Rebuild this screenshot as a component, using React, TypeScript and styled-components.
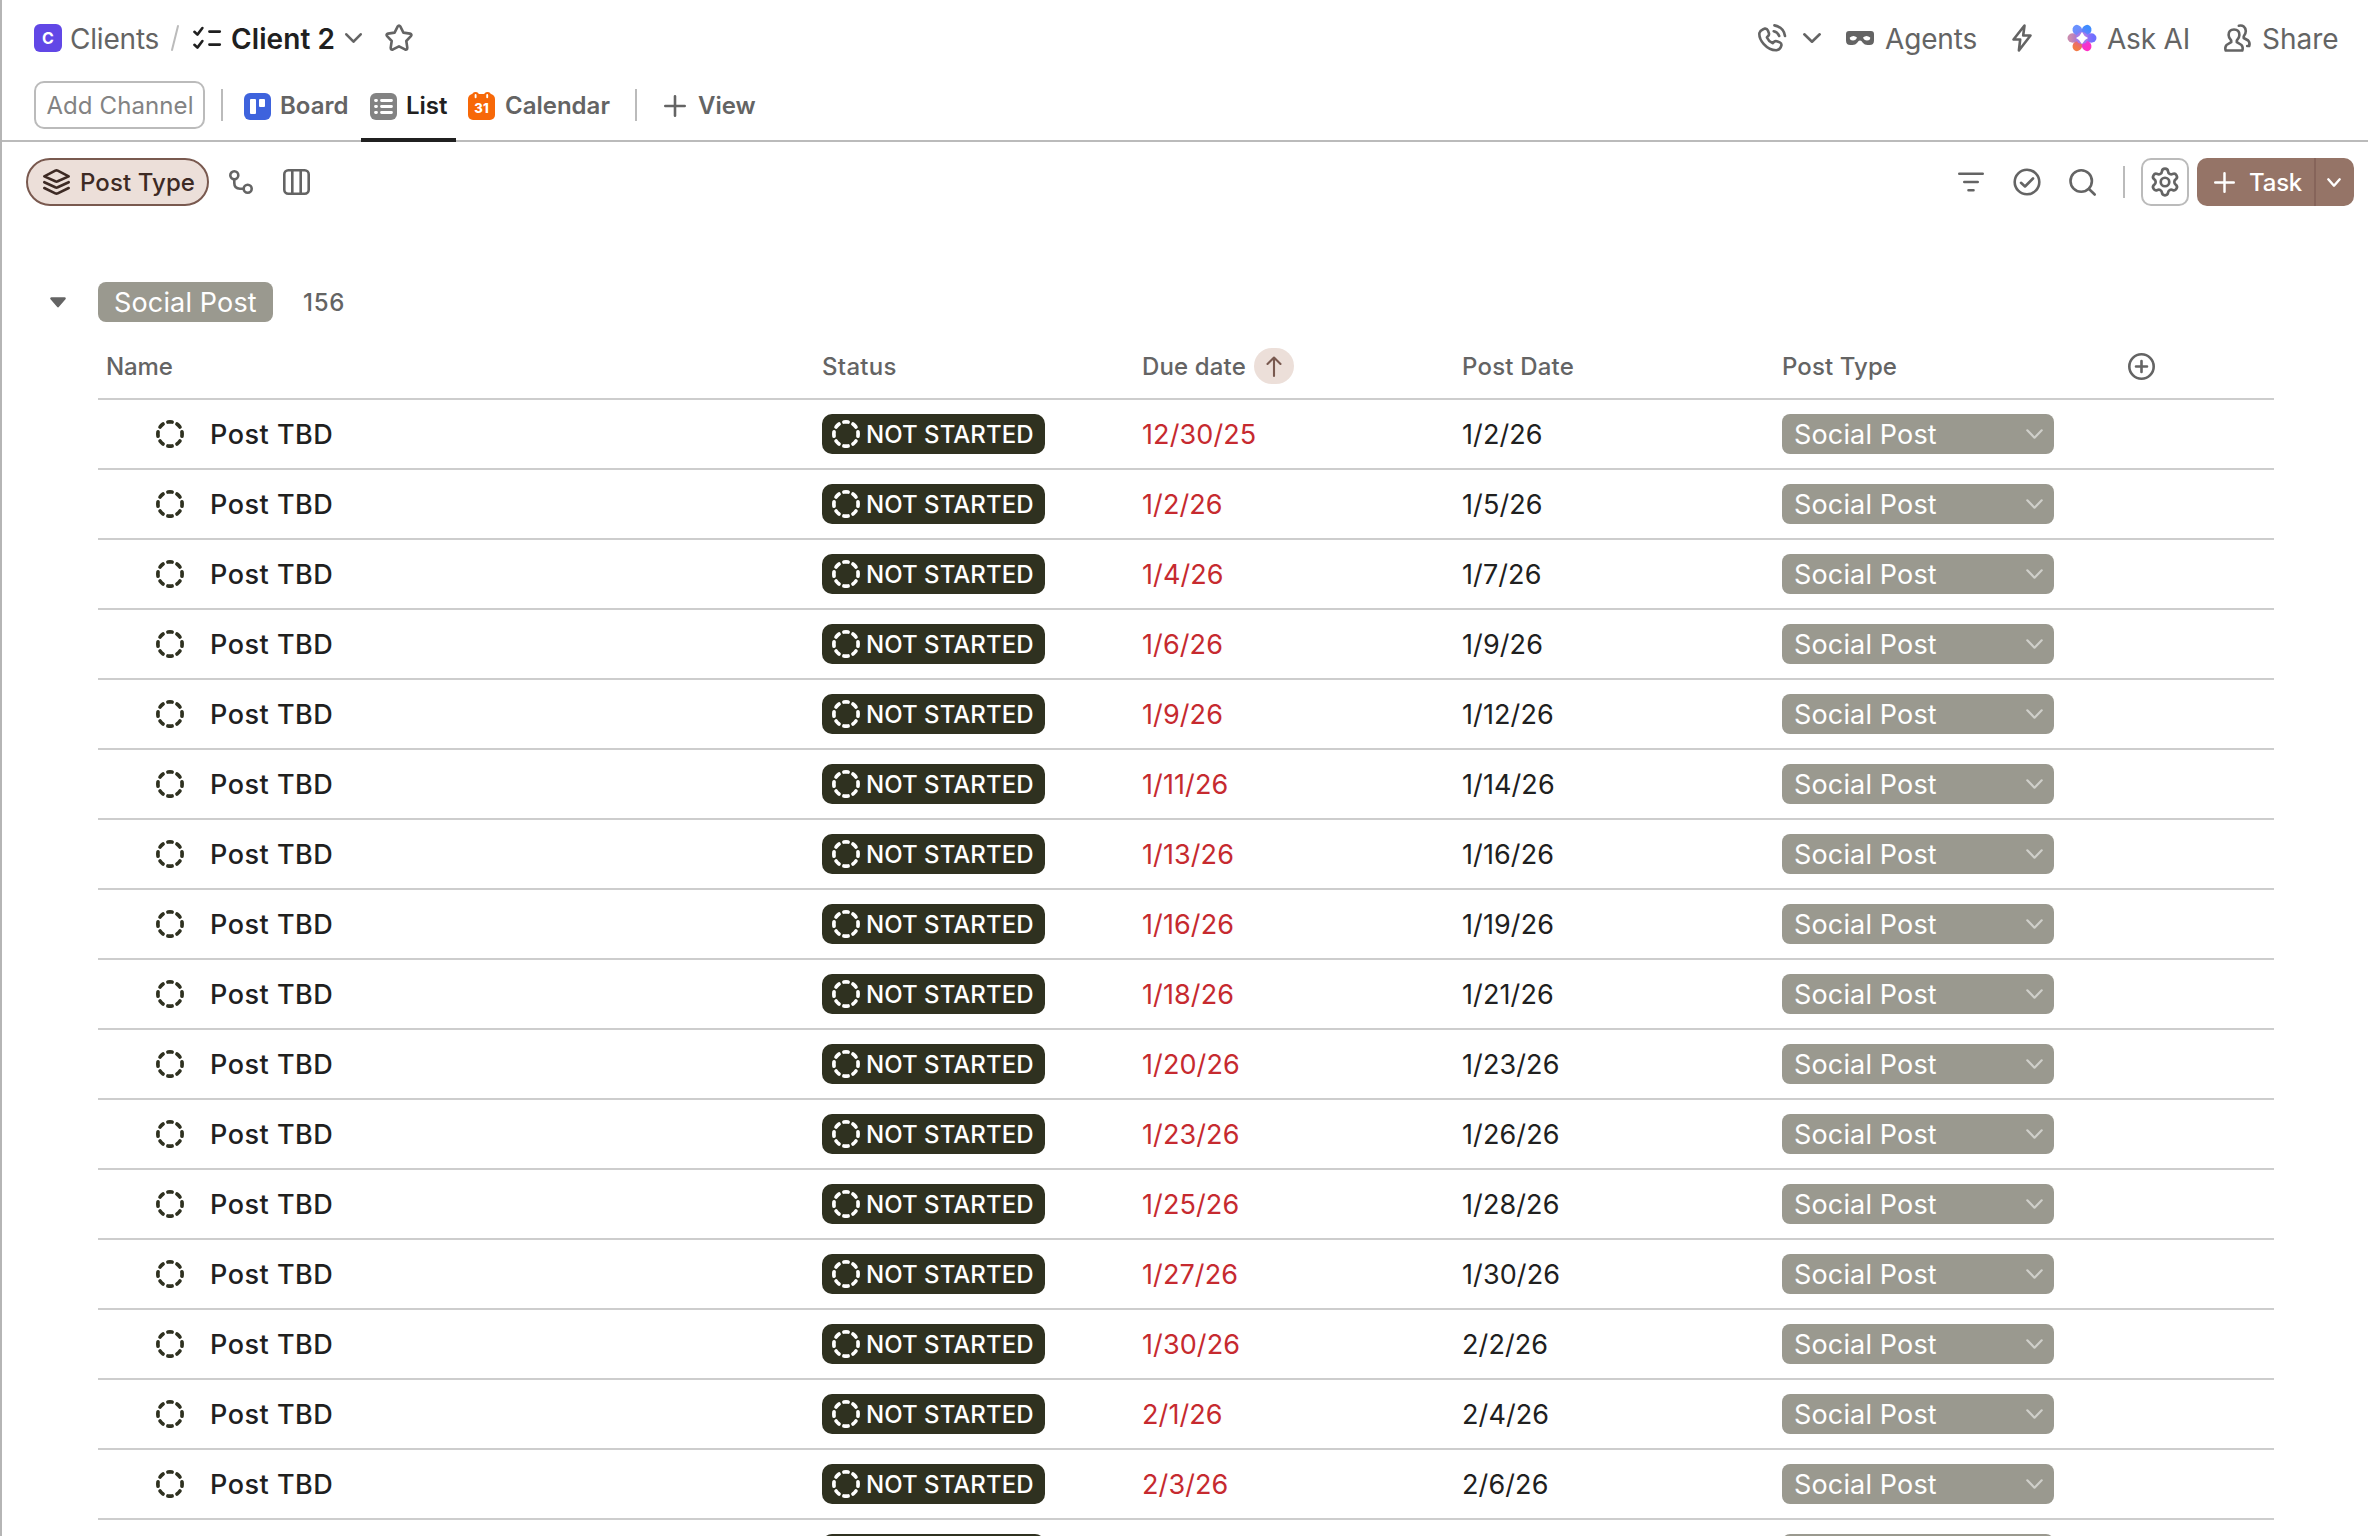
import React from "react";
import styled, { createGlobalStyle, css } from "styled-components";

const GlobalStyle = createGlobalStyle`
  *, *::before, *::after { box-sizing: border-box; }
  body {
    margin: 0;
    background: #fff;
    font-family: Inter, "Liberation Sans", sans-serif;
    color: #202020;
    overflow: hidden;
  }
`;

const GREY = "#646464";

const Page = styled.div`
  width: 2368px;
  height: 1536px;
  overflow: hidden;
  display: flex;
  flex-direction: column;
  border-left: 2px solid #b5b5b5;
  background: #fff;
`;

const TopBar = styled.header`
  height: 76px;
  flex: none;
  display: flex;
  align-items: center;
  justify-content: space-between;
  padding: 0 30px 0 32px;
`;

const Cluster = styled.div`
  display: flex;
  align-items: center;
`;

const Label = styled.span<{
  $size: number;
  $weight?: number;
  $color?: string;
  $w?: number;
  $spacing?: number;
  $ml?: number;
  $drop?: number;
}>`
  display: block;
  flex: none;
  white-space: nowrap;
  font-size: ${(p) => p.$size}px;
  font-weight: ${(p) => p.$weight ?? 400};
  color: ${(p) => p.$color ?? GREY};
  width: ${(p) => (p.$w ? `${p.$w}px` : "auto")};
  letter-spacing: ${(p) => p.$spacing ?? 0}px;
  margin-left: ${(p) => p.$ml ?? 0}px;
  padding-top: ${(p) => (p.$drop ?? 1) * 2}px;
  line-height: 38px;
`;

const Glyph = styled.svg<{ $w: number; $h?: number; $ml?: number; $color?: string }>`
  display: block;
  flex: none;
  overflow: visible;
  width: ${(p) => p.$w}px;
  height: ${(p) => p.$h ?? p.$w}px;
  margin-left: ${(p) => p.$ml ?? 0}px;
  color: ${(p) => p.$color ?? GREY};
  fill: none;
  stroke: currentColor;
  stroke-width: 2.6;
  stroke-linecap: round;
  stroke-linejoin: round;
`;

const SpaceBadge = styled.span`
  width: 28px;
  height: 28px;
  border-radius: 6px;
  background: #6147e6;
  color: #fff;
  font-size: 16px;
  font-weight: 700;
  line-height: 28px;
  text-align: center;
`;

const ViewBar = styled.nav`
  height: 66px;
  flex: none;
  display: flex;
  align-items: stretch;
  padding-left: 32px;
  border-bottom: 2px solid #bbb;
`;

const ChannelButton = styled.button`
  margin: 5px 0 0;
  padding: 1px 0 0 1px;
  width: 171px;
  height: 48px;
  border: 2px solid #bbb;
  border-radius: 10px;
  background: #fff;
  color: #838383;
  font: 400 24px Inter, sans-serif;
  letter-spacing: 0.1px;
`;

const Tab = styled.div<{ $w: number; $ml?: number; $active?: boolean }>`
  height: 66px;
  width: ${(p) => p.$w}px;
  margin-left: ${(p) => p.$ml ?? 0}px;
  padding: 0 0 6px 9px;
  display: flex;
  align-items: center;
  ${(p) =>
    p.$active &&
    css`
      padding-bottom: 2px;
      border-bottom: 4px solid #202020;
    `}
`;

const Divider = styled.span<{ $h?: number; $ml: number; $mt?: number }>`
  flex: none;
  width: 2px;
  height: ${(p) => p.$h ?? 32}px;
  margin: ${(p) => p.$mt ?? 0}px 0 0 ${(p) => p.$ml}px;
  background: #bbb;
`;

const Toolbar = styled.div`
  height: 80px;
  flex: none;
  display: flex;
  align-items: center;
  justify-content: space-between;
  padding: 0 14px 0 24px;
`;

const GroupPill = styled.div`
  width: 183px;
  height: 48px;
  border: 2px solid #79594f;
  border-radius: 24px;
  background: #ecdfd9;
  display: flex;
  align-items: center;
  padding-left: 15px;
`;

const SettingsButton = styled.div`
  width: 48px;
  height: 48px;
  margin-left: 16px;
  border: 2px solid #bbb;
  border-radius: 10px;
  display: grid;
  place-items: center;
`;

const TaskButton = styled.div`
  width: 157px;
  height: 48px;
  margin-left: 8px;
  border-radius: 10px;
  background: #957467;
  display: flex;
  align-items: center;
  overflow: hidden;
`;

const TaskMain = styled.div`
  width: 119px;
  height: 48px;
  border-right: 2px solid #86645a;
  display: flex;
  align-items: center;
  padding-left: 17px;
`;

const GroupHeader = styled.div`
  height: 40px;
  margin-top: 60px;
  flex: none;
  display: flex;
  align-items: center;
  padding-left: 48px;
`;

const GroupBadge = styled.span`
  width: 175px;
  height: 40px;
  margin-left: 32px;
  padding: 1px 0 0 16px;
  border-radius: 8px;
  background: #9a998f;
  color: #fff;
  font-size: 27px;
  letter-spacing: 0.15px;
  line-height: 39px;
  white-space: nowrap;
`;

const Table = styled.div`
  margin: 12px 0 0 96px;
  width: 2176px;
`;

const grid = css`
  display: grid;
  grid-template-columns: 724px 320px 320px 320px 492px;
  align-items: center;
  border-bottom: 2px solid #cdcdcd;
`;

const HeadRow = styled.div`
  ${grid}
  height: 66px;
`;

const Row = styled.div`
  ${grid}
  height: 70px;
`;

const StatusPill = styled.div`
  width: 223px;
  height: 40px;
  border-radius: 10px;
  background: #2f3120;
  display: flex;
  align-items: center;
  padding-left: 10px;
`;

const SortPill = styled.span`
  width: 40px;
  height: 36px;
  margin-left: 8px;
  border-radius: 18px;
  background: #ecdfd9;
  display: grid;
  place-items: center;
`;

const TypeCell = styled.div`
  display: flex;
  align-items: center;
  justify-content: space-between;
  width: 272px;
  height: 40px;
  padding: 0 11px 0 12px;
  border-radius: 8px;
  background: #9a998f;
`;

const Chevron = ({ w, h, ml, color, sw = 2.6 }: { w: number; h: number; ml?: number; color?: string; sw?: number }) => (
  <Glyph $w={w} $h={h} $ml={ml} $color={color} viewBox={`0 0 ${w} ${h}`}>
    <path d={`M1.3 1.3 L${w / 2} ${h - 1.3} L${w - 1.3} 1.3`} style={{ strokeWidth: sw }} />
  </Glyph>
);

const Plus = ({ size, ml, color }: { size: number; ml?: number; color?: string }) => (
  <Glyph $w={size} $ml={ml} $color={color} viewBox="0 0 22 22">
    <path d="M11 1.3v19.4M1.3 11h19.4" />
  </Glyph>
);

const segments = Array.from({ length: 8 }, (_, i) => i * 45);

const DashedCircle = ({ color, ml }: { color: string; ml?: number }) => (
  <Glyph $w={28} $ml={ml} $color={color} viewBox="0 0 28 28">
    {segments.map((a) => (
      <path key={a} d="M11.9 2.05 Q14 1.7 16.1 2.05" transform={`rotate(${a} 14 14)`} style={{ strokeWidth: 3.7 }} />
    ))}
  </Glyph>
);

const petals: [number, string, string][] = [
  [30, "#3f8cff", "#6d7dff"],
  [90, "#6f70ff", "#a06cf5"],
  [150, "#ff2fc4", "#e03ce0"],
  [210, "#f27a48", "#e0608c"],
  [270, "#c98bb0", "#a873cf"],
  [330, "#6a92ff", "#7a7cf5"],
];

const AiFlower = ({ ml }: { ml?: number }) => (
  <Glyph $w={30} $ml={ml} viewBox="0 0 30 30">
    <defs>
      {petals.map(([a, outer, inner]) => (
        <linearGradient key={a} id={`petal${a}`} x1="0" y1="0" x2="0" y2="1">
          <stop offset="0.3" stopColor={outer} />
          <stop offset="1" stopColor={inner} />
        </linearGradient>
      ))}
    </defs>
    <g style={{ stroke: "none" }}>
      {petals.map(([a]) => (
        <ellipse key={a} cx="15" cy="5.8" rx="4.7" ry="5.3" fill={`url(#petal${a})`} transform={`rotate(${a} 15 15)`} />
      ))}
      <circle cx="15" cy="15" r="6" fill="#a57bea" />
      <path d="M15 9Q16.800 13.200 21 15Q16.800 16.800 15 21Q13.200 16.800 9 15Q13.200 13.200 15 9Z" fill="#fff" />
    </g>
  </Glyph>
);

const tasks: [string, string][] = [
  ["12/30/25", "1/2/26"],
  ["1/2/26", "1/5/26"],
  ["1/4/26", "1/7/26"],
  ["1/6/26", "1/9/26"],
  ["1/9/26", "1/12/26"],
  ["1/11/26", "1/14/26"],
  ["1/13/26", "1/16/26"],
  ["1/16/26", "1/19/26"],
  ["1/18/26", "1/21/26"],
  ["1/20/26", "1/23/26"],
  ["1/23/26", "1/26/26"],
  ["1/25/26", "1/28/26"],
  ["1/27/26", "1/30/26"],
  ["1/30/26", "2/2/26"],
  ["2/1/26", "2/4/26"],
  ["2/3/26", "2/6/26"],
  ["", ""],
];

const TaskRow = ({ due, post }: { due: string; post: string }) => (
  <Row>
    <Cluster>
      <DashedCircle color="#2f3120" ml={58} />
      <Label $size={27} $color="#202020" $ml={26} $spacing={0.5} $weight={450}>
        {due && "Post TBD"}
      </Label>
    </Cluster>
    <StatusPill>
      <DashedCircle color="#fff" />
      <Label $size={24} $weight={500} $color="#fff" $ml={6} $spacing={0.05}>
        {due && "NOT STARTED"}
      </Label>
    </StatusPill>
    <Label $size={27} $color="#c62a2f" $spacing={0.1}>
      {due}
    </Label>
    <Label $size={27} $color="#202020" $spacing={0.1}>
      {post}
    </Label>
    <TypeCell>
      <Label $size={27} $color="#fff" $spacing={0.15}>
        {due && "Social Post"}
      </Label>
      <Chevron w={17} h={10} color="#cfcfca" sw={2.2} />
    </TypeCell>
  </Row>
);

export default function App() {
  return (
    <>
      <GlobalStyle />
      <Page>
        <TopBar>
          <Cluster>
            <SpaceBadge>C</SpaceBadge>
            <Label $size={28} $ml={8} $w={93} $spacing={-0.2}>
              Clients
            </Label>
            <Glyph $w={8} $h={26} $ml={8} $color="#bbb" viewBox="0 0 8 26">
              <path d="M7 1 1 25" style={{ strokeWidth: 2 }} />
            </Glyph>
            <Glyph $w={28} $h={24} $ml={14} $color="#202020" viewBox="0 0 28 24">
              <path d="M1.4 5.8 4.4 8.6 9.4 2M1.4 18.8 4.4 21.6 9.4 15M16.4 5.6h10.4M16.4 18.6h10.4" />
            </Glyph>
            <Label $size={28} $weight={600} $color="#202020" $ml={10} $w={104} $spacing={0.1}>
              Client 2
            </Label>
            <Chevron w={17} h={10} ml={10} />
            <Glyph $w={28} $ml={23} viewBox="0 0 28 28">
              <path d="M12.6 2.6 Q14 0.6 15.4 2.6 L18.4 8.6 L25 9.6 Q27.4 10.3 25.9 12.2 L21.3 17 L22.3 23.7 Q22.3 26.2 20 25.4 L14 22.3 L8 25.4 Q5.7 26.2 5.7 23.7 L6.7 17 L2.1 12.2 Q0.6 10.3 3 9.6 L9.6 8.6Z" />
            </Glyph>
          </Cluster>
          <Cluster>
            <Glyph $w={28} viewBox="0 0 28 28">
              <path d="M5.2 5.2 7 4.6Q9 4.4 9.9 6.6L11 9.4Q11.3 10.8 10.2 12L8.9 13.4Q10.6 17.3 14.6 19.2L16.1 17.8Q17.2 16.8 18.7 17.2L21.8 18.4Q23.8 19.4 23.4 21.4Q22.4 25.6 18.5 26.2Q11.5 26.4 5.6 19.8Q.8 14.2 1.4 9Q2 6.6 5.2 5.2Z" />
              <path d="M16.4 1.4Q25.6 3 27 12M15.7 7.2Q19.6 8 21.2 12" />
            </Glyph>
            <Chevron w={18} h={10} ml={17} />
            <Glyph $w={28} $h={14} $ml={25} viewBox="0 0 28 14">
              <path
                d="M3 0H25Q28 0 28 3V9.500Q28 14 23.600 14H21.500Q18.500 14 17 12L15.400 10Q14 8.800 12.600 10L11 12Q9.500 14 6.500 14H4.400Q0 14 0 9.500V3Q0 0 3 0ZM3.800 6.500Q3.500 9.500 7 9.500Q10 9.500 11 6.500Q7.500 3.500 3.800 6.500ZM24.200 6.500Q20.500 3.500 17 6.500Q18 9.500 21 9.500Q24.500 9.500 24.200 6.500Z"
                fill="currentColor"
                fillRule="evenodd"
                style={{ stroke: "none" }}
              />
            </Glyph>
            <Label $size={28} $ml={11} $w={94} $spacing={-0.15}>
              Agents
            </Label>
            <Glyph $w={20} $h={28} $ml={33} viewBox="0 0 20 28">
              <path d="M12.500 1.500 1.500 15.500H8.200L6.900 26.500 18.500 11.500H11.200Z" />
            </Glyph>
            <AiFlower ml={35} />
            <Label $size={28} $ml={10} $w={83} $spacing={-0.2}>
              Ask AI
            </Label>
            <Glyph $w={27} $h={28} $ml={34} viewBox="0 0 27 28">
              <path d="M10 5.500Q15.400 5.500 15.400 11Q15.400 14 12.800 16.500V18.200L17.500 21Q19.400 23.500 18.300 26.500H1.700Q.6 23.500 2.500 21L7.200 18.200V16.500Q4.600 14 4.600 11Q4.600 5.500 10 5.500Z" />
              <path d="M14.800 1.700Q21.200.6 21.800 7Q21.800 10 19.700 12.300V14L24.200 16.500Q26.300 19 25.200 22H23.200" />
            </Glyph>
            <Label $size={28} $ml={11} $w={76}>
              Share
            </Label>
          </Cluster>
        </TopBar>

        <ViewBar>
          <ChannelButton>Add Channel</ChannelButton>
          <Divider $ml={16} $mt={13} />
          <Tab $w={126} $ml={12}>
            <Glyph $w={27} viewBox="0 0 27 27" $color="#3e63dd">
              <rect width="27" height="27" rx="6" fill="currentColor" style={{ stroke: "none" }} />
              <rect x="6" y="6" width="6" height="15" rx="1" fill="#fff" style={{ stroke: "none" }} />
              <rect x="15" y="6" width="6" height="8" rx="1" fill="#fff" style={{ stroke: "none" }} />
            </Glyph>
            <Label $size={24} $weight={600} $ml={9} $drop={0}>
              Board
            </Label>
          </Tab>
          <Tab $w={95} $active>
            <Glyph $w={27} viewBox="0 0 27 27" $color="#838383">
              <rect width="27" height="27" rx="6" fill="currentColor" style={{ stroke: "none" }} />
              <path d="M5.500 7.500h1M11.500 7.500h10M5.500 13.500h1M11.500 13.500h10M5.500 19.500h1M11.500 19.500h10" style={{ stroke: "#fff", strokeWidth: 2.800 }} />
            </Glyph>
            <Label $size={24} $weight={600} $color="#202020" $ml={9} $drop={0}>
              List
            </Label>
          </Tab>
          <Tab $w={163} $ml={3}>
            <Glyph $w={27} $h={28} viewBox="0 0 27 28" $color="#f76808">
              <rect y="2" width="27" height="26" rx="5" fill="currentColor" style={{ stroke: "none" }} />
              <rect x="4" width="7" height="8" rx="3.500" fill="currentColor" style={{ stroke: "none" }} />
              <rect x="16" width="7" height="8" rx="3.500" fill="currentColor" style={{ stroke: "none" }} />
              <path d="M7.600 3v2.200M19.200 3v2.200" style={{ stroke: "#fff", strokeWidth: 1.900 }} />
              <text x="13.500" y="21" textAnchor="middle" fontFamily="Inter" fontSize="13" fontWeight="800" fill="#fff" style={{ stroke: "none" }}>
                31
              </text>
            </Glyph>
            <Label $size={24} $weight={600} $ml={10} $drop={0}>
              Calendar
            </Label>
          </Tab>
          <Divider $ml={13} $mt={13} />
          <Tab $w={130} $ml={18}>
            <Plus size={22} />
            <Label $size={24} $weight={600} $ml={12} $drop={0}>
              View
            </Label>
          </Tab>
        </ViewBar>

        <Toolbar>
          <Cluster>
            <GroupPill>
              <Glyph $w={27} $h={26} $color="#3d2a24" viewBox="0 0 27 26">
                <path d="M1.300 7.400 12.300 1.700Q13.500 1.100 14.700 1.700L25.700 7.400 14.700 12.300Q13.500 12.900 12.300 12.300ZM1.300 13.200 12.300 18.300Q13.500 18.900 14.700 18.300L25.700 13.200M1.300 19 12.300 24.300Q13.500 24.900 14.700 24.300L25.700 19" />
              </Glyph>
              <Label $size={24} $weight={500} $color="#3d2a24" $ml={10} $spacing={0.1}>
                Post Type
              </Label>
            </GroupPill>
            <Glyph $w={24} $ml={20} viewBox="0 0 24 24">
              <circle cx="5.300" cy="5.300" r="4" />
              <circle cx="18.700" cy="18.700" r="4" />
              <path d="M5.300 9.500V13Q5.300 18.700 11 18.700H14.500" />
            </Glyph>
            <Glyph $w={27} $h={26} $ml={30} viewBox="0 0 27 26">
              <rect x="1.300" y="1.300" width="24.400" height="23.400" rx="4" />
              <path d="M9.300 1.500v23M17.700 1.500v23" />
            </Glyph>
          </Cluster>
          <Cluster>
            <Glyph $w={26} $h={20} viewBox="0 0 26 20">
              <path d="M1.300 1.800h23.400M6.300 10h13.400M10.500 18.200h5" />
            </Glyph>
            <Glyph $w={28} $ml={29} viewBox="0 0 28 28">
              <circle cx="14" cy="14" r="12.300" />
              <path d="M8 14.800 12 18.500 20 10.500" />
            </Glyph>
            <Glyph $w={27} $ml={28} viewBox="0 0 27 27">
              <circle cx="12.200" cy="12" r="10.700" />
              <path d="M20 20 25.700 25.500" />
            </Glyph>
            <Divider $ml={27} />
            <SettingsButton>
              <Glyph $w={32} viewBox="0 0 24 24">
                <path
                  style={{ strokeWidth: 2 }}
                  d="M9.671 4.136a2.340 2.340 0 0 1 4.659 0 2.340 2.340 0 0 0 3.319 1.915 2.340 2.340 0 0 1 2.330 4.033 2.340 2.340 0 0 0 0 3.831 2.340 2.340 0 0 1-2.330 4.033 2.340 2.340 0 0 0-3.319 1.915 2.340 2.340 0 0 1-4.659 0 2.340 2.340 0 0 0-3.320-1.915 2.340 2.340 0 0 1-2.330-4.033 2.340 2.340 0 0 0 0-3.831A2.340 2.340 0 0 1 6.350 6.051a2.340 2.340 0 0 0 3.319-1.915"
                />
                <circle cx="12" cy="12" r="3.200" style={{ strokeWidth: 2 }} />
              </Glyph>
            </SettingsButton>
            <TaskButton>
              <TaskMain>
                <Plus size={21} color="#fff" />
                <Label $size={24} $weight={500} $color="#fff" $ml={14} $spacing={-0.2}>
                  Task
                </Label>
              </TaskMain>
              <Chevron w={14} h={9} ml={11} color="#fff" sw={2.400} />
            </TaskButton>
          </Cluster>
        </Toolbar>

        <GroupHeader>
          <Glyph $w={16} $h={11} viewBox="0 0 16 11">
            <path d="M1.500 1.500H14.500L8 9Z" fill="currentColor" />
          </Glyph>
          <GroupBadge>Social Post</GroupBadge>
          <Label $size={24} $weight={450} $ml={30} $spacing={0.700}>
            156
          </Label>
        </GroupHeader>

        <Table>
          <HeadRow>
            <Label $size={24} $weight={450} $ml={8} $spacing={-0.100}>
              Name
            </Label>
            <Label $size={24} $weight={450} $spacing={0.300}>
              Status
            </Label>
            <Cluster>
              <Label $size={24} $weight={450} $spacing={0.150}>
                Due date
              </Label>
              <SortPill>
                <Glyph $w={16} $h={21} $color="#79594f" viewBox="0 0 16 21">
                  <path d="M8 20V1.500M1.500 8 8 1.500 14.500 8" style={{ strokeWidth: 2.100 }} />
                </Glyph>
              </SortPill>
            </Cluster>
            <Label $size={24} $weight={450} $spacing={0.200}>
              Post Date
            </Label>
            <Cluster>
              <Label $size={24} $weight={450} $w={346} $spacing={0.100}>
                Post Type
              </Label>
              <Glyph $w={27} viewBox="0 0 27 27">
                <circle cx="13.500" cy="13.500" r="12.200" />
                <path d="M13.500 8v11M8 13.500h11" />
              </Glyph>
            </Cluster>
          </HeadRow>
          {tasks.map(([due, post], i) => (
            <TaskRow key={i} due={due} post={post} />
          ))}
        </Table>
      </Page>
    </>
  );
}
